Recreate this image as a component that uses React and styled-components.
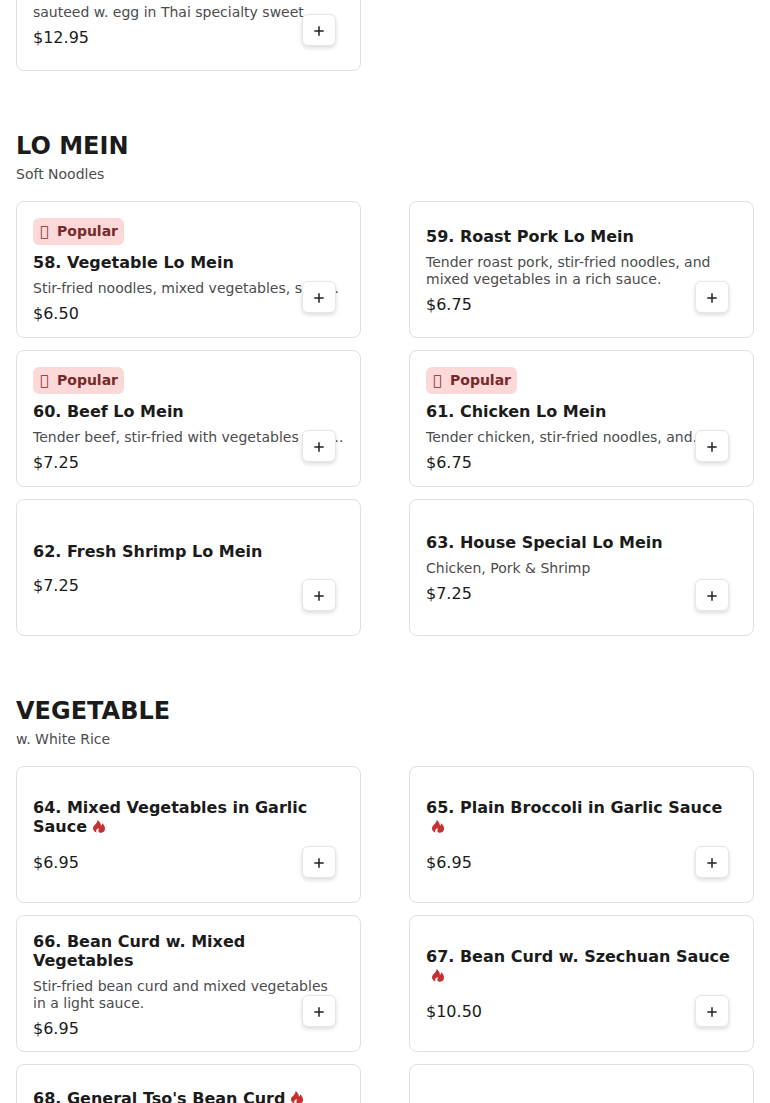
import React from "react";
import styled, { createGlobalStyle } from "styled-components";

const sections = [
  {
    items: [
      {
        name: "57. Pad Thai",
        description:
          "Thin rice noodles with chicken or tofu sauteed w. egg in Thai specialty sweet",
        price: "$12.95",
      },
    ],
  },
  {
    title: "LO MEIN",
    subtitle: "Soft Noodles",
    items: [
      {
        name: "58. Vegetable Lo Mein",
        description: "Stir-fried noodles, mixed vegetables, sear…",
        price: "$6.50",
        popular: true,
      },
      {
        name: "59. Roast Pork Lo Mein",
        description:
          "Tender roast pork, stir-fried noodles, and mixed vegetables in a rich sauce.",
        price: "$6.75",
      },
      {
        name: "60. Beef Lo Mein",
        description: "Tender beef, stir-fried with vegetables and…",
        price: "$7.25",
        popular: true,
      },
      {
        name: "61. Chicken Lo Mein",
        description: "Tender chicken, stir-fried noodles, and…",
        price: "$6.75",
        popular: true,
      },
      { name: "62. Fresh Shrimp Lo Mein", price: "$7.25" },
      {
        name: "63. House Special Lo Mein",
        description: "Chicken, Pork & Shrimp",
        price: "$7.25",
      },
    ],
  },
  {
    title: "VEGETABLE",
    subtitle: "w. White Rice",
    items: [
      {
        name: "64. Mixed Vegetables in Garlic Sauce",
        price: "$6.95",
        spicy: true,
      },
      {
        name: "65. Plain Broccoli in Garlic Sauce",
        price: "$6.95",
        spicy: true,
      },
      {
        name: "66. Bean Curd w. Mixed Vegetables",
        description: "Stir-fried bean curd and mixed vegetables in a light sauce.",
        price: "$6.95",
        tall: true,
      },
      {
        name: "67. Bean Curd w. Szechuan Sauce",
        price: "$10.50",
        spicy: true,
      },
      {
        name: "68. General Tso's Bean Curd",
        description: "Crispy bean curd and broccoli tossed in a sweet and spicy sauce.",
        price: "$10.50",
        spicy: true,
      },
      {},
    ],
  },
];

const MenuItem = ({ item }) => {
  return (
    <Card $tall={item.tall}>
      {item.popular && (
        <Badge>
          <BadgeIcon>{"\uf164"}</BadgeIcon>
          Popular
        </Badge>
      )}
      <Name $spicy={item.spicy}>
        {item.name}
        {item.spicy && (
          <Flame viewBox="0 0 12 13">
            <path d="M4.5 0C6.3 1.2 7.9 3.3 8 5.9C8.8 5.2 9.2 4.4 9 3.3C10.9 4.6 12 6.6 12 8.7C12 11.2 10.2 12.8 7.6 12.8C6.4 12.8 5.6 12.2 5.4 11.3C5.3 10.2 6 9.3 5.6 8C4.6 8.6 3 9.7 3.1 11C3.2 11.7 3.4 12.2 3.8 12.6C1.5 12.1 0 10.4 0 8.2C0 5.1 4.6 4.2 4.5 0Z" />
          </Flame>
        )}
      </Name>
      <Description>{item.description}</Description>
      <Price>{item.price}</Price>
      <AddButton aria-label="Add">
        <svg width="10" height="10" viewBox="0 0 10 10">
          <path d="M5 0.3V9.7M0.3 5H9.7" stroke="#222" strokeWidth="1.5" />
        </svg>
      </AddButton>
    </Card>
  );
};

const App = () => {
  return (
    <Page>
      <GlobalStyle />
      <Menu>
        {sections.map((section, i) => (
          <section key={i}>
            {section.title && (
              <Header>
                <Title>{section.title}</Title>
                <Subtitle>{section.subtitle}</Subtitle>
              </Header>
            )}
            <Grid>
              {section.items.map((item, j) => (
                <MenuItem key={j} item={item} />
              ))}
            </Grid>
          </section>
        ))}
      </Menu>
    </Page>
  );
};

export default App;

const GlobalStyle = createGlobalStyle`
  * {
    box-sizing: border-box;
  }
  body {
    margin: 0;
    background: #fff;
    color: #1b1b1b;
    font-family: "DejaVu Sans", sans-serif;
  }
`;
const Page = styled.div`
  height: 1103px;
  overflow: hidden;
`;
/* the list is scrolled part way through the first card */
const Menu = styled.div`
  margin-top: -66px;
  padding: 0 16px;
`;
const Header = styled.div`
  padding: 61px 0 18px;
`;
const Title = styled.h2`
  margin: 0 0 6px;
  font-size: 24px;
  line-height: 28px;
  font-weight: bold;
`;
const Subtitle = styled.div`
  font-size: 14px;
  line-height: 17px;
  color: #4c4c4c;
`;
const Grid = styled.div`
  display: grid;
  grid-template-columns: 1fr 1fr;
  grid-auto-rows: 137px;
  gap: 12px 48px;
`;
const Card = styled.div`
  position: relative;
  display: flex;
  flex-direction: column;
  align-items: flex-start;
  justify-content: center;
  padding: ${(props) => (props.$tall ? "3px" : "1px")} 16px 0;
  border: 1px solid #e0e0e0;
  border-radius: 8px;
`;
const Badge = styled.div`
  display: flex;
  align-items: center;
  height: 27px;
  padding: 0 6px 0 7px;
  margin-bottom: 8px;
  border-radius: 6px;
  background: #fdd8d8;
  color: #762a2a;
  font-size: 14px;
  font-weight: bold;
`;
const BadgeIcon = styled.span`
  width: 17px;
`;
const Name = styled.div`
  margin-bottom: ${(props) => (props.$spicy ? "10px" : "8px")};
  font-size: 16px;
  line-height: 19px;
  font-weight: bold;
`;
const Flame = styled.svg`
  width: 12px;
  height: 13px;
  margin-left: 6px;
  vertical-align: -0.5px;
  fill: #c53030;
`;
const Description = styled.div`
  margin-bottom: 7px;
  font-size: 14px;
  line-height: 17px;
  color: #4c4c4c;
`;
const Price = styled.div`
  font-size: 16px;
  line-height: 19px;
`;
const AddButton = styled.button`
  position: absolute;
  right: 24px;
  bottom: 24px;
  display: flex;
  align-items: center;
  justify-content: center;
  width: 34px;
  height: 32px;
  padding: 2px 0 0;
  border: 1px solid #e6e6e6;
  border-radius: 6px;
  background: #fff;
  box-shadow: 0 2px 4px rgba(0, 0, 0, 0.14);
  cursor: pointer;
`;
